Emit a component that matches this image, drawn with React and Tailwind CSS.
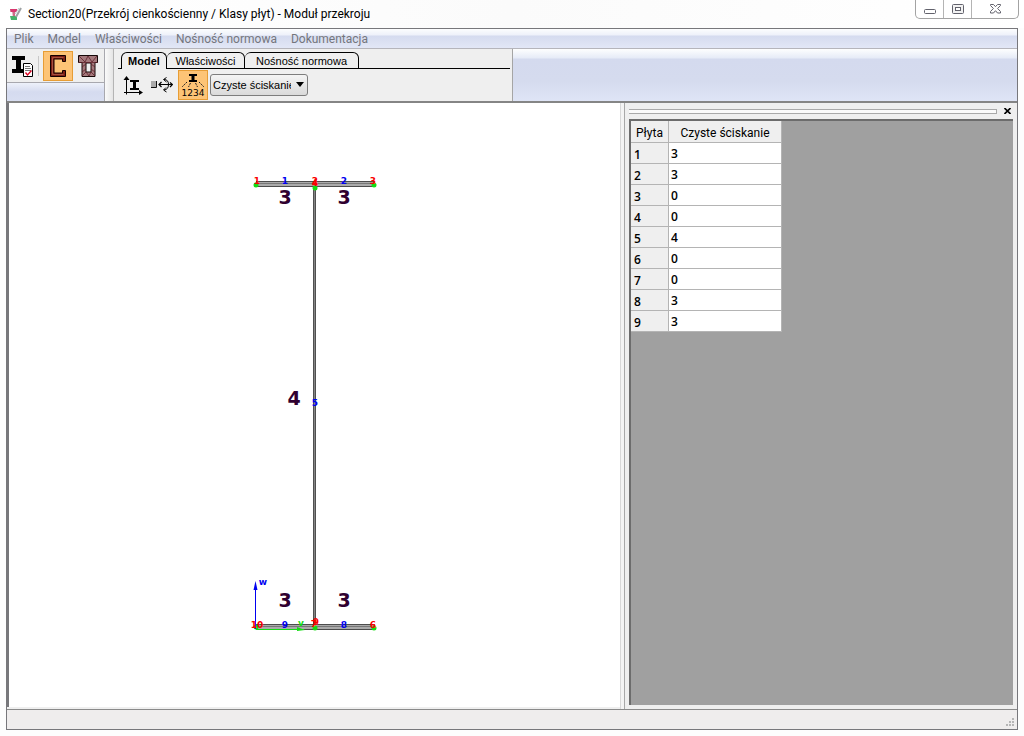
import React from "react";

const menus = ["Plik", "Model", "Właściwości", "Nośność normowa", "Dokumentacja"];

const plates = [
  [1, 3],
  [2, 3],
  [3, 0],
  [4, 0],
  [5, 4],
  [6, 0],
  [7, 0],
  [8, 3],
  [9, 3],
];

function AppIcon() {
  return (
    <svg width="16" height="16" viewBox="0 0 16 16" aria-hidden="true">
      <path d="M2 3h7l-1 3H6l2 6H5L4 6H2z" fill="#d9a0ae" />
      <path d="M2 3h7v3H3z" fill="#d8386f" />
      <path d="M5 6h2v4H5z" fill="#cf6a86" />
      <path d="M2 10h7v4H3z" fill="#46b26a" />
      <path d="M13 2L8 11" stroke="#9da1a3" strokeWidth="2" />
      <path d="M11 2L7 8" stroke="#c3c7c9" strokeWidth="1" />
    </svg>
  );
}

function TitleBar() {
  return (
    <header className="flex h-7 shrink-0 items-start bg-gradient-to-r from-white via-[#fbfbfb] to-white pl-2">
      <div className="flex h-7 min-w-0 flex-1 items-center gap-1">
        <AppIcon />
        <h1 className="truncate font-[Roboto,'Noto_Sans',sans-serif] text-[12px] leading-4 text-black">
          Section20(Przekrój cienkościenny / Klasy płyt) - Moduł przekroju
        </h1>
      </div>
      <div className="mr-[5px] flex h-[19px] rounded-b-[5px] border border-t-0 border-[#a3a3a3] bg-white">
        <button aria-label="Minimalizuj" className="flex w-7 items-center justify-center border-r border-[#b4b4b4]">
          <svg width="13" height="12" viewBox="0 0 13 12">
            <rect x="1.5" y="6.5" width="11" height="4" rx="1" fill="#fff" stroke="#62626c" />
          </svg>
        </button>
        <button aria-label="Maksymalizuj" className="flex w-7 items-center justify-center border-r border-[#b4b4b4]">
          <svg width="12" height="11" viewBox="0 0 12 11">
            <rect x=".5" y=".5" width="11" height="9" rx="1" fill="#f2f2f2" stroke="#62626c" />
            <rect x="3.5" y="3.5" width="5" height="3" fill="#fff" stroke="#62626c" />
          </svg>
        </button>
        <button aria-label="Zamknij" className="flex w-[46px] items-center justify-center">
          <svg width="13" height="12" viewBox="0 0 13 12">
            <path
              d="M1.5 1.5h3l2 2.2 2-2.2h3v1L8.6 5.5l2.9 3v1.5h-3l-2-2.3-2 2.3h-3V8.5l2.9-3-2.9-3z"
              fill="#fff"
              stroke="#62626c"
            />
          </svg>
        </button>
      </div>
    </header>
  );
}

function MenuBar() {
  return (
    <nav className="flex h-5 shrink-0 items-center gap-3.5 border-b border-[#b5b5bb] bg-[linear-gradient(#fcfdfe_0,#eef1fa_6px,#d5dbef_7px,#e2e7f6_100%)] pl-[7px]">
      {menus.map((m) => (
        <button key={m} className="font-[Roboto,'Noto_Sans',sans-serif] text-[12px] leading-4 text-[#74767d]">
          {m}
        </button>
      ))}
    </nav>
  );
}

function SectionReportIcon() {
  return (
    <svg width="22" height="24" viewBox="0 0 22 24">
      <path d="M0 2h13v4H9v9h3v4H0v-4h4V6H0z" fill="#000" />
      <path d="M11.5 9.5h7l2 2v11h-9z" fill="#fff" stroke="#000" />
      <path d="M13 12.5h5M13 14.5h6M13 16.5h6" stroke="#777" />
      <path d="M13.5 18.5l2 2.5 4-4.5" fill="none" stroke="#e00020" strokeWidth="1.3" />
    </svg>
  );
}

function ChannelIcon() {
  return (
    <svg width="16" height="22" viewBox="0 0 16 22">
      <path d="M.5 .5h15v6h-3v-2.500h-8.500v14h8.500V15.500h3v6H.5z" fill="#7c1f14" stroke="#120000" />
      <path d="M2.500 2.500h11M2.500 2.500v17h11" fill="none" stroke="#b0604a" strokeWidth=".8" />
    </svg>
  );
}

function ThinWallIcon() {
  return (
    <svg width="20" height="22" viewBox="0 0 20 22">
      <path d="M.5 .5h19v7h-2.5v14h-13v-14H.5zM8 8v9h5V8z" fill="#a4797c" fillRule="evenodd" stroke="#160808" />
      <path d="M1 1l6 6 3-6 4 6 5-6M.5 7.5h19M4 12l4-3M4 17l4-3M4 21l4-4 3 4 2-4 4 4M13 9l4 3M13 14l4 3" fill="none" stroke="#5e2029" strokeWidth=".8" />
    </svg>
  );
}

function AxesIcon() {
  return (
    <svg width="20" height="19" viewBox="0 0 20 19">
      <path d="M3.5 18.5V2M1 16.5h17" stroke="#000" fill="none" />
      <path d="M3.5 0l3 4h-6zM20 16.5l-4 2.5v-5z" fill="#000" />
      <path d="M7 4h9v2h-3v6h3v2H7v-2h3V6H7z" fill="#000" />
    </svg>
  );
}

function RotateIcon() {
  return (
    <svg width="22" height="18" viewBox="0 0 22 18">
      <rect x="0" y="5" width="5" height="7" fill="#aaa" />
      <path d="M0 11.5h5.500V5" fill="none" stroke="#111" />
      <path d="M8 8.500h13M10.500 6l-2.500 2.500 2.500 2.500M19 6.500l2.500 2-2.500 2.500" fill="none" stroke="#000" strokeWidth="1.200" />
      <path d="M13 3.500q4.500 0 4.500 5t-4.500 5.500M15.500 1.500l-3 2 3 2.500M15 11.500l-2.500 2.500 3 2" fill="none" stroke="#000" />
    </svg>
  );
}

function NumberingIcon() {
  return (
    <svg width="26" height="26" viewBox="0 0 26 26">
      <path d="M9 2h8v2h-2.5v4H17v2H9V8h2.5V4H9z" fill="#000" />
      <path d="M7 10l-5 5M10.5 11l-2 4M15.5 11l2 4M19 10l5 5" stroke="#222" strokeDasharray="2 1" />
      <text x="13" y="24" textAnchor="middle" fontFamily="DejaVu Sans, sans-serif" fontSize="9">
        1234
      </text>
    </svg>
  );
}

function Toolbars() {
  return (
    <div className="flex h-[52px] shrink-0 bg-[#efefef]">
      <div className="flex w-[98px] shrink-0 flex-col border-r border-[#a8a8ae]">
        <div className="flex h-[34px] items-center border-b border-[#a8a8ae] pl-[5px]">
          <button aria-label="Raport przekroju" className="flex w-[22px] justify-center">
            <SectionReportIcon />
          </button>
          <div className="mx-1 h-5 w-px bg-[#c8c8c8]" />
          <button aria-label="Przekrój cienkościenny" className="flex h-[30px] w-[30px] items-center justify-center border border-[#e79d35] bg-[#fdc476]">
            <ChannelIcon />
          </button>
          <button aria-label="Przekrój z płyt" className="flex w-[30px] justify-center">
            <ThinWallIcon />
          </button>
        </div>
        <div className="flex-1 bg-gradient-to-b from-[#eef1fa] via-[#d5dbef] to-[#d8def1]" />
      </div>
      <div className="w-[9px] shrink-0 border-r border-[#b4b4b4] bg-gradient-to-r from-[#fafafa] to-[#e5e5e5]" />
      <div className="flex w-[399px] shrink-0 flex-col border-r border-[#a5a5a5] pl-1 pr-0.5 pt-[3px]">
        <div role="tablist" className="flex h-[17px] font-['Liberation_Sans',Arial,sans-serif] text-[11px] leading-4 text-black">
          <div className="w-[3px] border-b border-black" />
          <button role="tab" aria-selected="true" className="w-[46px] rounded-t-[6px] border border-b-0 border-black font-bold">
            Model
          </button>
          <button role="tab" aria-selected="false" className="w-[78px] rounded-t-[6px] border border-l-0 border-black">
            Właściwości
          </button>
          <button role="tab" aria-selected="false" className="w-[114px] rounded-t-[6px] border border-l-0 border-black">
            Nośność normowa
          </button>
          <div className="flex-1 border-b border-black" />
        </div>
        <div className="flex flex-1 items-center gap-0.5 pl-[3px]">
          <button aria-label="Osie" className="flex w-6 justify-center">
            <AxesIcon />
          </button>
          <button aria-label="Obrót" className="flex w-[29px] justify-center">
            <RotateIcon />
          </button>
          <button aria-label="Numeracja" className="flex h-[30px] w-[30px] items-center justify-center border border-[#e79d35] bg-[#fdc476]">
            <NumberingIcon />
          </button>
          <div className="relative h-[22px] w-[98px]">
            <select
              aria-label="Stan obciążenia"
              className="block h-full w-full appearance-none rounded-[3px] border border-[#7d7d7d] bg-gradient-to-b from-[#f4f4f4] to-[#dadada] pl-[2px] pr-4 font-['Liberation_Sans',Arial,sans-serif] text-[11px] text-black"
            >
              <option>Czyste ściskanie</option>
            </select>
            <svg className="pointer-events-none absolute right-1 top-2" width="8" height="5" viewBox="0 0 8 5">
              <path d="M0 0h8L4 5z" fill="#000" />
            </svg>
          </div>
        </div>
      </div>
      <div className="min-w-0 flex-1 bg-[linear-gradient(#fdfefe_0,#e6ebf7_9px,#d4daee_10px,#d5dbee_32px,#dfe5f6_100%)]" />
    </div>
  );
}

function Flange({ y }) {
  return (
    <g>
      <rect x="15" y={y} width="119" height="6" fill="#aaa" />
      <path d={`M15 ${y + 0.5}h119M15 ${y + 5.5}h119`} stroke="#4c4c4c" />
      <path d={`M15 ${y + 2.5}h119`} stroke="#777" />
    </g>
  );
}

const blueLabels = [
  [44, 14, "1"],
  [103, 14, "2"],
  [74, 236, "5"],
  [44, 458, "9"],
  [103, 458, "8"],
];

const redLabels = [
  [16, 14, "1"],
  [74, 14, "2"],
  [132, 14, "3"],
  [74, 16, "4"],
  [16, 458, "10"],
  [73, 457, "7"],
  [75, 455, "9"],
  [132, 458, "6"],
];

const classLabels = [
  [44, 34, "3"],
  [103, 34, "3"],
  [53, 235, "4"],
  [44, 437, "3"],
  [103, 437, "3"],
];

function SectionDrawing() {
  return (
    <svg width="148" height="470" viewBox="0 0 148 470" role="img" aria-label="Przekrój dwuteowy" fontFamily="DejaVu Sans, sans-serif" fontWeight="bold" textAnchor="middle">
      <rect x="72" y="12" width="3" height="446" fill="#505050" />
      <rect x="73" y="12" width="1" height="446" fill="#858585" />
      <Flange y={11} />
      <Flange y={454} />
      <g fill="#14dc14">
        <circle cx="15" cy="15" r="2.5" />
        <circle cx="74" cy="18" r="2.5" />
        <circle cx="133" cy="15" r="2.5" />
        <circle cx="15" cy="457" r="2.5" />
        <circle cx="74" cy="458" r="2.5" />
        <circle cx="133" cy="458" r="2.5" />
        <path d="M64 460l-8-3v4z" />
      </g>
      <path d="M15 459.5h48" stroke="#14dc14" />
      <path d="M14.5 459v-42" stroke="#0000f0" />
      <path d="M14.5 411l2 9h-4z" fill="#0000f0" />
      <g fontSize="9">
        <text x="60" y="456" fill="#14dc14">v</text>
        <text x="22" y="415" fill="#0000f0">w</text>
        {blueLabels.map(([x, y, t], i) => (
          <text key={i} x={x} y={y} fill="#0000f0">{t}</text>
        ))}
        {redLabels.map(([x, y, t], i) => (
          <text key={i} x={x} y={y} fill="#fa0000">{t}</text>
        ))}
      </g>
      <g fontSize="19" fill="#300030">
        {classLabels.map(([x, y, t], i) => (
          <text key={i} x={x} y={y}>{t}</text>
        ))}
      </g>
    </svg>
  );
}

function ResultsPanel() {
  return (
    <aside className="flex w-[393px] shrink-0 flex-col border-l border-[#a8a8a8] bg-[#efefef] pb-1 pl-1 pr-1">
      <div className="flex h-4 shrink-0 items-center gap-1">
        <div className="h-[5px] flex-1 border-y border-r border-[#a9a9a9] bg-[#fafafa]" />
        <button aria-label="Zamknij panel" className="flex w-3 items-center justify-center">
          <svg width="7" height="6" viewBox="0 0 7 6">
            <path d="M.5 0l6 6M6.5 0l-6 6" stroke="#000" strokeWidth="1.6" />
          </svg>
        </button>
      </div>
      <div className="flex-1 overflow-auto border-l-2 border-t-2 border-[#6c6c6c] bg-[#a0a0a0]">
        <table className="w-[151px] table-fixed border-separate border-spacing-0 font-['Open_Sans','Noto_Sans',sans-serif] text-[12px] leading-4 text-black">
          <thead>
            <tr className="h-[22px] bg-[#efefef] font-[Roboto,'Noto_Sans',sans-serif]">
              <th scope="col" className="w-[38px] border-b border-r border-[#b4b4b4] p-0 pt-0.5 font-normal">Płyta</th>
              <th scope="col" className="border-b border-r border-[#b4b4b4] p-0 pt-0.5 font-normal">Czyste ściskanie</th>
            </tr>
          </thead>
          <tbody>
            {plates.map(([plate, value]) => (
              <tr key={plate} className="h-[21px]">
                <th scope="row" className="border-b border-r border-[#b4b4b4] bg-[#efefef] p-0 pl-[3px] pt-1 text-left font-semibold">
                  {plate}
                </th>
                <td className="border-b border-r border-[#b4b4b4] bg-white p-0 pl-0.5 pt-0.5 font-semibold">{value}</td>
              </tr>
            ))}
          </tbody>
        </table>
      </div>
    </aside>
  );
}

export default function App() {
  return (
    <div className="flex h-screen flex-col overflow-hidden bg-[#fdfdfd]">
      <TitleBar />
      <div className="mx-1.5 mb-1.5 flex min-h-0 flex-1 flex-col border border-[#77777b] bg-[#efefef]">
        <MenuBar />
        <Toolbars />
        <main className="flex min-h-0 flex-1 border-t-2 border-[#858585]">
          <div className="mb-0.5 flex min-w-0 flex-1 items-center justify-center border-l-2 border-[#77777b] bg-white">
            <SectionDrawing />
          </div>
          <div className="w-1 shrink-0 border-l border-[#d8d8d8] bg-[#f4f4f4]" />
          <ResultsPanel />
        </main>
        <footer className="flex h-5 shrink-0 items-end justify-end border-t border-[#8a8a8a] bg-[#efeded] p-0.5">
          <svg width="9" height="9" viewBox="0 0 9 9" fill="#b5b5b5" aria-hidden="true">
            <path d="M6 0h2v2H6zM3 3h2v2H3zM6 3h2v2H6zM0 6h2v2H0zM3 6h2v2H3zM6 6h2v2H6z" />
          </svg>
        </footer>
      </div>
    </div>
  );
}
